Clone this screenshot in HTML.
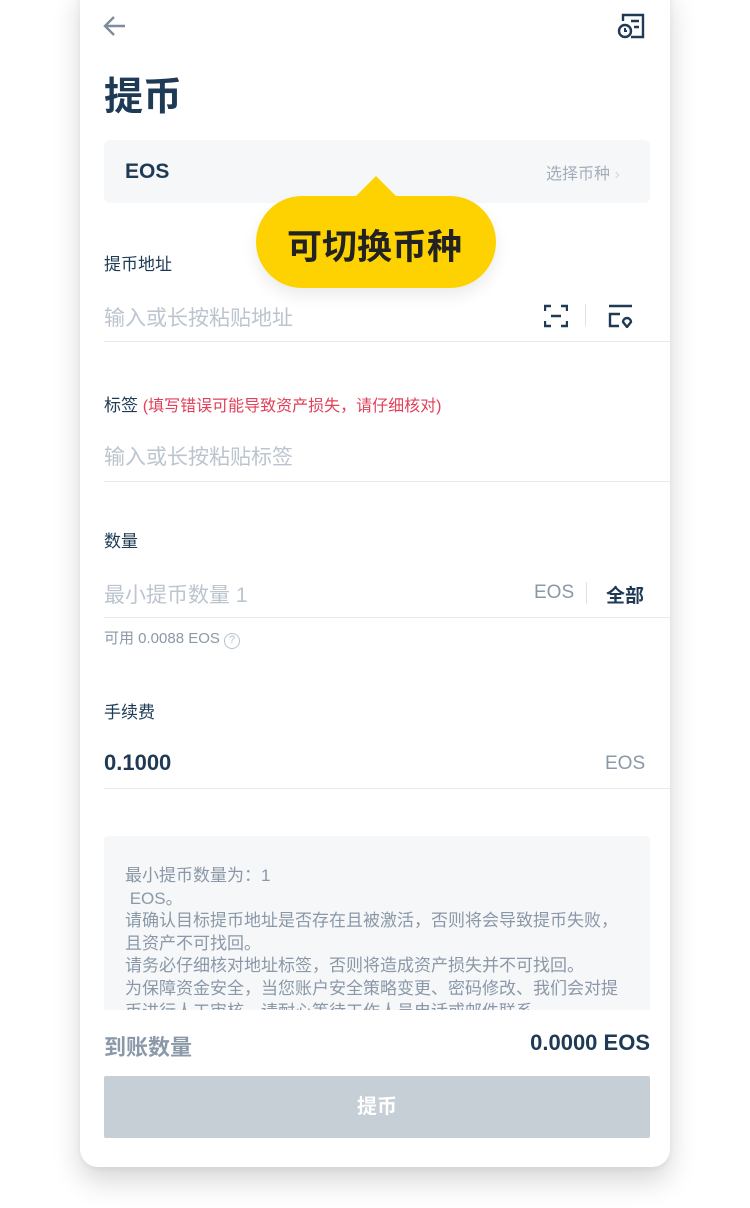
<!DOCTYPE html>
<html><head><meta charset="utf-8"><style>
*{margin:0;padding:0;box-sizing:border-box}
body{width:750px;height:1208px;background:#fff;position:relative;overflow:hidden;font-family:"Liberation Sans","Noto Sans CJK SC",sans-serif;color:#1e3a55}
.card{position:absolute;left:80px;top:-20px;width:590px;height:1187px;background:#fff;border-radius:18px;box-shadow:0 14px 28px rgba(0,0,0,.16),0 2px 6px rgba(0,0,0,.05)}
.a{position:absolute;white-space:nowrap}
.line{position:absolute;left:104px;width:566px;height:1px;background:#e8eaee}
.lbl{font-size:17px;color:#1e3a55}
.ph{font-size:21px;color:#bcc5cf}
.g{color:#8a98a8}
</style></head><body>
<div class="card"></div>
<svg class="a" style="left:102px;top:14px" width="26" height="24" viewBox="0 0 26 24"><path d="M23 12H4M12 3L3 12l9 9" fill="none" stroke="#7e8d9d" stroke-width="2.4"/></svg>
<svg class="a" style="left:617px;top:12px" width="28" height="28" viewBox="0 0 28 28"><path d="M6 9V3h20v22H14" fill="none" stroke="#1e3a55" stroke-width="2.4"/><path d="M14 9h8M17 15h5" stroke="#1e3a55" stroke-width="2.4"/><circle cx="8" cy="19" r="6" fill="none" stroke="#1e3a55" stroke-width="2.4"/><path d="M8 16v3h2" fill="none" stroke="#1e3a55" stroke-width="2"/></svg>
<div class="a" style="left:104px;top:66px;font-size:39px;font-weight:bold">提币</div>
<div class="a" style="left:104px;top:140px;width:546px;height:63px;background:#f6f7f9;border-radius:6px"></div>
<div class="a" style="left:125px;top:160px;font-size:21px;font-weight:bold">EOS</div>
<div class="a g" style="left:546px;top:160px;font-size:16px;color:#a3aebb">选择币种 <span style="color:#d4d9df">›</span></div>
<div class="a" style="left:256px;top:196px;width:240px;height:92px;background:#fdd200;border-radius:46px;box-shadow:0 8px 16px rgba(0,0,0,.08)"></div>
<div class="a" style="left:355px;top:176px;width:0;height:0;border-left:21px solid transparent;border-right:21px solid transparent;border-bottom:21px solid #fdd200"></div>
<div class="a" style="left:287px;top:219px;font-size:35px;font-weight:bold;color:#222">可切换币种</div>
<div class="a lbl" style="left:104px;top:250px">提币地址</div>
<div class="a ph" style="left:104px;top:302px">输入或长按粘贴地址</div>
<svg class="a" style="left:544px;top:304px" width="24" height="24" viewBox="0 0 24 24" fill="none" stroke="#1e3a55" stroke-width="2.4"><path d="M1 7V2h6M17 2h6v5M23 17v5h-6M7 22H1v-5M7 12h10"/></svg>
<div class="a" style="left:585px;top:304px;width:1px;height:22px;background:#dfe3e8"></div>
<svg class="a" style="left:608px;top:304px" width="26" height="24" viewBox="0 0 26 24" fill="none" stroke="#1e3a55" stroke-width="2.4"><path d="M1 2h23M11 22H2V10h10"/><path d="M19 23l-4-5a4 4 0 1 1 8 0z" fill="none"/></svg>
<div class="line" style="top:341px"></div>
<div class="a lbl" style="left:104px;top:391px">标签 <span style="color:#e0405a;font-size:16px">(填写错误可能导致资产损失，请仔细核对)</span></div>
<div class="a ph" style="left:104px;top:441px">输入或长按粘贴标签</div>
<div class="line" style="top:481px"></div>
<div class="a lbl" style="left:104px;top:527px">数量</div>
<div class="a ph" style="left:104px;top:579px">最小提币数量 1</div>
<div class="a" style="left:534px;top:582px;font-size:19px;color:#8a98a8">EOS</div>
<div class="a" style="left:586px;top:582px;width:1px;height:22px;background:#dfe3e8"></div>
<div class="a" style="left:606px;top:581px;font-size:19px;font-weight:bold">全部</div>
<div class="line" style="top:617px"></div>
<div class="a g" style="left:104px;top:627px;font-size:15px">可用 0.0088 EOS <span style="display:inline-block;width:16px;height:16px;border:1.5px solid #b8c2cc;border-radius:50%;font-size:11px;text-align:center;line-height:13px;color:#b8c2cc">?</span></div>
<div class="a lbl" style="left:104px;top:698px">手续费</div>
<div class="a" style="left:104px;top:750px;font-size:22px;font-weight:bold">0.1000</div>
<div class="a" style="left:605px;top:753px;font-size:19px;color:#8a98a8">EOS</div>
<div class="line" style="top:788px"></div>
<div class="a" style="left:104px;top:836px;width:546px;height:174px;background:#f6f7f9;border-radius:4px 4px 0 0;overflow:hidden">
<div style="padding:29px 0 0 21px;font-size:17px;line-height:22.6px;color:#8a98a8">最小提币数量为：1<br>&nbsp;EOS。<br>请确认目标提币地址是否存在且被激活，否则将会导致提币失败，<br>且资产不可找回。<br>请务必仔细核对地址标签，否则将造成资产损失并不可找回。<br>为保障资金安全，当您账户安全策略变更、密码修改、我们会对提<br>币进行人工审核，请耐心等待工作人员电话或邮件联系。</div></div>
<div class="a" style="left:104px;top:1030px;font-size:22px;font-weight:bold;color:#8a98a8">到账数量</div>
<div class="a" style="right:100px;top:1030px;font-size:22px;font-weight:bold">0.0000 EOS</div>
<div class="a" style="left:104px;top:1076px;width:546px;height:62px;background:#c6ced6;border-radius:2px;color:#fff;font-size:20px;font-weight:bold;text-align:center;line-height:62px">提币</div>
</body></html>
